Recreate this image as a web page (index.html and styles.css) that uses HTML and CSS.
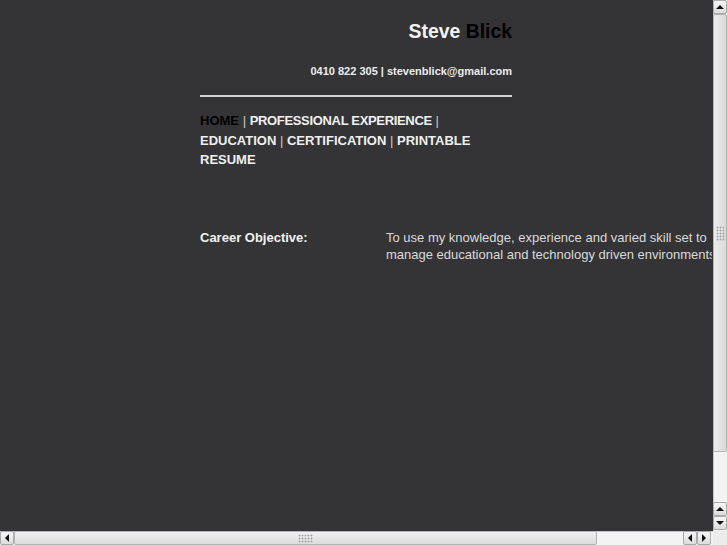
FILE: index.html
```html
<!DOCTYPE html>
<html>
<head>
<meta charset="utf-8">
<title>Steve Blick</title>
<link rel="stylesheet" href="styles.css">
</head>
<body>
<div class="viewport">
  <div class="page">
    <h1 class="name"><span class="first">Steve</span> <span class="last">Blick</span></h1>
    <p class="contact">0410 822 305 | stevenblick@gmail.com</p>
    <div class="rule"></div>
    <nav class="nav"><a class="current">HOME</a> <span class="sep">|</span> <a class="tight">PROFESSIONAL EXPERIENCE</a> <span class="sep">|</span> <a>EDUCATION</a> <span class="sep">|</span> <a>CERTIFICATION</a> <span class="sep">|</span> <a>PRINTABLE RESUME</a></nav>
    <div class="details">
      <div class="label">Career Objective:</div>
      <div class="value">To use my knowledge, experience and varied skill set to manage educational and technology driven environments.</div>
    </div>
  </div>
</div>

<div class="vscroll">
  <div class="btn"><span class="tri up"></span></div>
  <div class="thumb vthumb"><span class="grip vgrip"></span></div>
  <div class="trough"></div>
  <div class="btn"><span class="tri up"></span></div>
  <div class="btn"><span class="tri down"></span></div>
</div>
<div class="hscroll">
  <div class="btn"><span class="tri left"></span></div>
  <div class="thumb hthumb"><span class="grip hgrip"></span></div>
  <div class="trough"></div>
  <div class="btn"><span class="tri left"></span></div>
  <div class="btn"><span class="tri right"></span></div>
</div>
<div class="corner"></div>
</body>
</html>
```

FILE: styles.css
```css
html, body {
  margin: 0;
  padding: 0;
  height: 100%;
  overflow: hidden;
  background: #343436;
}

body {
  font-family: "Liberation Sans", Arial, Helvetica, sans-serif;
  color: #ffffff;
}

.viewport {
  width: 712px;
  height: 531px;
  overflow: hidden;
}

.page {
  width: 312px;
  margin: 0 auto;
}

.name {
  margin: 20px 0 0;
  font-size: 19.4px;
  line-height: 23px;
  font-weight: bold;
  text-align: right;
}

.name .first { color: #f4f4f4; }
.name .last { color: #000000; }

.contact {
  margin: 22px 0 0;
  font-size: 11px;
  line-height: 13px;
  font-weight: bold;
  text-align: right;
  color: #ececec;
}

.rule {
  margin-top: 17px;
  height: 2px;
  background: #cfcfcf;
}

.nav {
  margin-top: 14px;
  font-size: 13px;
  line-height: 19.6px;
  font-weight: bold;
  color: #f0f0f0;
}

.nav a { color: #f0f0f0; }
.nav a.current { color: #000000; }
.nav a.tight { letter-spacing: -0.33px; }
.nav .sep { font-weight: normal; color: #cccccc; }

.details {
  margin-top: 59px;
  display: flex;
  width: 540px;
  font-size: 13px;
  line-height: 17.5px;
}

.label {
  flex: 0 0 186px;
  font-weight: bold;
  color: #f2f2f2;
}

.value {
  flex: 0 0 350px;
  color: #dadada;
}

/* scrollbars drawn over the page */
.vscroll {
  position: fixed;
  top: 0;
  right: 0;
  width: 14px;
  height: 531px;
  display: flex;
  flex-direction: column;
  background: #f3f3f3;
  box-shadow: inset 1px 0 0 #c4c4c4;
}

.hscroll {
  position: fixed;
  left: 0;
  bottom: 0;
  width: 713px;
  height: 14px;
  display: flex;
  background: #f3f3f3;
  box-shadow: inset 0 1px 0 #c4c4c4;
}

.corner {
  position: fixed;
  right: 0;
  bottom: 0;
  width: 14px;
  height: 14px;
  background: #ececec;
}

.btn {
  flex: 0 0 14px;
  width: 14px;
  height: 14px;
  box-sizing: border-box;
  border: 1px solid #a9a9a9;
  border-radius: 2px;
  background: linear-gradient(#f6f6f6, #dcdcdc);
  display: flex;
  align-items: center;
  justify-content: center;
}

.hscroll .btn:last-child { margin-right: 2px; }
.vscroll .btn:last-child { margin-bottom: 1px; }

.thumb {
  box-sizing: border-box;
  border: 1px solid #b4b4b4;
  border-radius: 2px;
  display: flex;
  align-items: center;
  justify-content: center;
}

.vthumb {
  flex: 0 0 438px;
  background: linear-gradient(90deg, #ececec, #dadada);
}

.hthumb {
  flex: 0 0 583px;
  background: linear-gradient(#f0f0f0, #dcdcdc);
}

.trough { flex: 1 1 auto; }

.grip {
  display: block;
  background-image: radial-gradient(circle, #9c9c9c 0.8px, transparent 1.1px);
  background-size: 3px 3px;
}

.vgrip { width: 9px; height: 15px; }
.hgrip { width: 15px; height: 9px; }

.tri {
  display: block;
  width: 0;
  height: 0;
}

.tri.up {
  border-left: 4px solid transparent;
  border-right: 4px solid transparent;
  border-bottom: 4px solid #111;
}

.tri.down {
  border-left: 4px solid transparent;
  border-right: 4px solid transparent;
  border-top: 4px solid #111;
}

.tri.left {
  border-top: 4px solid transparent;
  border-bottom: 4px solid transparent;
  border-right: 4px solid #111;
}

.tri.right {
  border-top: 4px solid transparent;
  border-bottom: 4px solid transparent;
  border-left: 4px solid #111;
}
```
